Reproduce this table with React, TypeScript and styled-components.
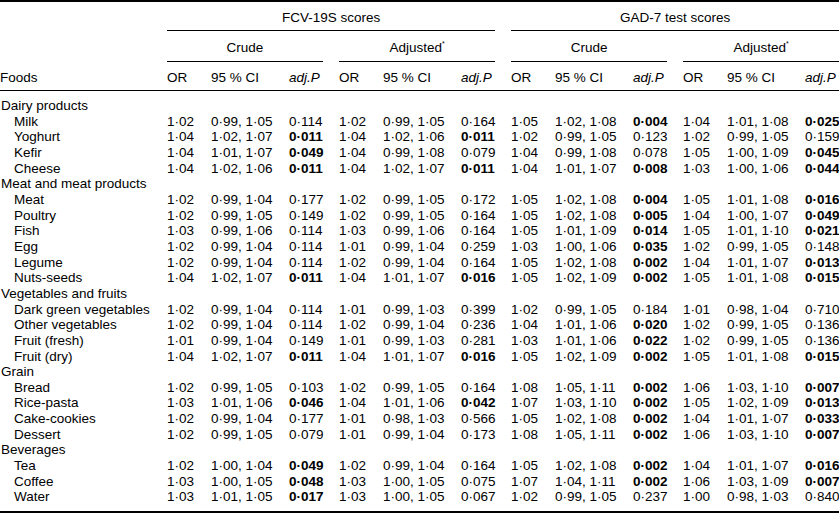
import styled, { createGlobalStyle } from "styled-components";

const GlobalStyle = createGlobalStyle`
  html, body {
    margin: 0;
    padding: 0;
    background: #fff;
  }
  body {
    font-family: "Liberation Sans", Arial, sans-serif;
    color: #000;
  }
`;

type Row =
  | { group: string }
  | { food: string; v: string[] };

// p-values that are bold in the source
const isBold = (s: string) => s.startsWith("**");
const clean = (s: string) => s.replace(/\*\*/g, "");

const rows: Row[] = [
  { group: "Dairy products" },
  { food: "Milk", v: ["1·02", "0·99, 1·05", "0·114", "1·02", "0·99, 1·05", "0·164", "1·05", "1·02, 1·08", "**0·004", "1·04", "1·01, 1·08", "**0·025"] },
  { food: "Yoghurt", v: ["1·04", "1·02, 1·07", "**0·011", "1·04", "1·02, 1·06", "**0·011", "1·02", "0·99, 1·05", "0·123", "1·02", "0·99, 1·05", "0·159"] },
  { food: "Kefir", v: ["1·04", "1·01, 1·07", "**0·049", "1·04", "0·99, 1·08", "0·079", "1·04", "0·99, 1·08", "0·078", "1·05", "1·00, 1·09", "**0·045"] },
  { food: "Cheese", v: ["1·04", "1·02, 1·06", "**0·011", "1·04", "1·02, 1·07", "**0·011", "1·04", "1·01, 1·07", "**0·008", "1·03", "1·00, 1·06", "**0·044"] },
  { group: "Meat and meat products" },
  { food: "Meat", v: ["1·02", "0·99, 1·04", "0·177", "1·02", "0·99, 1·05", "0·172", "1·05", "1·02, 1·08", "**0·004", "1·05", "1·01, 1·08", "**0·016"] },
  { food: "Poultry", v: ["1·02", "0·99, 1·05", "0·149", "1·02", "0·99, 1·05", "0·164", "1·05", "1·02, 1·08", "**0·005", "1·04", "1·00, 1·07", "**0·049"] },
  { food: "Fish", v: ["1·03", "0·99, 1·06", "0·114", "1·03", "0·99, 1·06", "0·164", "1·05", "1·01, 1·09", "**0·014", "1·05", "1·01, 1·10", "**0·021"] },
  { food: "Egg", v: ["1·02", "0·99, 1·04", "0·114", "1·01", "0·99, 1·04", "0·259", "1·03", "1·00, 1·06", "**0·035", "1·02", "0·99, 1·05", "0·148"] },
  { food: "Legume", v: ["1·02", "0·99, 1·04", "0·114", "1·02", "0·99, 1·04", "0·164", "1·05", "1·02, 1·08", "**0·002", "1·04", "1·01, 1·07", "**0·013"] },
  { food: "Nuts-seeds", v: ["1·04", "1·02, 1·07", "**0·011", "1·04", "1·01, 1·07", "**0·016", "1·05", "1·02, 1·09", "**0·002", "1·05", "1·01, 1·08", "**0·015"] },
  { group: "Vegetables and fruits" },
  { food: "Dark green vegetables", v: ["1·02", "0·99, 1·04", "0·114", "1·01", "0·99, 1·03", "0·399", "1·02", "0·99, 1·05", "0·184", "1·01", "0·98, 1·04", "0·710"] },
  { food: "Other vegetables", v: ["1·02", "0·99, 1·04", "0·114", "1·02", "0·99, 1·04", "0·236", "1·04", "1·01, 1·06", "**0·020", "1·02", "0·99, 1·05", "0·136"] },
  { food: "Fruit (fresh)", v: ["1·01", "0·99, 1·04", "0·149", "1·01", "0·99, 1·03", "0·281", "1·03", "1·01, 1·06", "**0·022", "1·02", "0·99, 1·05", "0·136"] },
  { food: "Fruit (dry)", v: ["1·04", "1·02, 1·07", "**0·011", "1·04", "1·01, 1·07", "**0·016", "1·05", "1·02, 1·09", "**0·002", "1·05", "1·01, 1·08", "**0·015"] },
  { group: "Grain" },
  { food: "Bread", v: ["1·02", "0·99, 1·05", "0·103", "1·02", "0·99, 1·05", "0·164", "1·08", "1·05, 1·11", "**0·002", "1·06", "1·03, 1·10", "**0·007"] },
  { food: "Rice-pasta", v: ["1·03", "1·01, 1·06", "**0·046", "1·04", "1·01, 1·06", "**0·042", "1·07", "1·03, 1·10", "**0·002", "1·05", "1·02, 1·09", "**0·013"] },
  { food: "Cake-cookies", v: ["1·02", "0·99, 1·04", "0·177", "1·01", "0·98, 1·03", "0·566", "1·05", "1·02, 1·08", "**0·002", "1·04", "1·01, 1·07", "**0·033"] },
  { food: "Dessert", v: ["1·02", "0·99, 1·05", "0·079", "1·01", "0·99, 1·04", "0·173", "1·08", "1·05, 1·11", "**0·002", "1·06", "1·03, 1·10", "**0·007"] },
  { group: "Beverages" },
  { food: "Tea", v: ["1·02", "1·00, 1·04", "**0·049", "1·02", "0·99, 1·04", "0·164", "1·05", "1·02, 1·08", "**0·002", "1·04", "1·01, 1·07", "**0·016"] },
  { food: "Coffee", v: ["1·03", "1·00, 1·05", "**0·048", "1·03", "1·00, 1·05", "0·075", "1·07", "1·04, 1·11", "**0·002", "1·06", "1·03, 1·09", "**0·007"] },
  { food: "Water", v: ["1·03", "1·01, 1·05", "**0·017", "1·03", "1·00, 1·05", "0·067", "1·02", "0·99, 1·05", "0·237", "1·00", "0·98, 1·03", "0·840"] },
];

const App = () => {
  const triples = [0, 1, 2, 3];
  return (
    <>
      <GlobalStyle />
      <Frame>
        <Table>
          <colgroup>
            <col style={{ width: 167 }} />
            {triples.map((t) => (
              <Triple key={t} spacer={t < 3} />
            ))}
          </colgroup>
          <thead>
            <tr>
              <Blank />
              <GroupHead colSpan={7}>FCV-19S scores</GroupHead>
              <Blank />
              <GroupHead colSpan={7}>GAD-7 test scores</GroupHead>
            </tr>
            <tr>
              <Blank />
              {triples.map((t) => (
                <SubHeads key={t} label={t % 2 === 0 ? "Crude" : "Adjusted"} star={t % 2 === 1} spacer={t < 3} />
              ))}
            </tr>
            <tr>
              <ColHead>Foods</ColHead>
              {triples.map((t) => (
                <ColHeads key={t} spacer={t < 3} />
              ))}
            </tr>
          </thead>
          <tbody>
            {rows.map((r, i) =>
              "group" in r ? (
                <tr key={i}>
                  <Food>{r.group}</Food>
                  <td colSpan={15} />
                </tr>
              ) : (
                <tr key={i}>
                  <Food indent>{r.food}</Food>
                  {r.v.map((val, j) => (
                    <Cells key={j} value={val} spacer={j % 3 === 2 && j < 11} />
                  ))}
                </tr>
              )
            )}
          </tbody>
        </Table>
      </Frame>
    </>
  );
};

const Triple = ({ spacer }: { spacer: boolean }) => (
  <>
    <col style={{ width: 44 }} />
    <col style={{ width: 78 }} />
    <col style={{ width: 34 }} />
    {spacer && <col style={{ width: 16 }} />}
  </>
);

const SubHeads = ({ label, star, spacer }: { label: string; star: boolean; spacer: boolean }) => (
  <>
    <SubHead colSpan={3}>
      {label}
      {star && <Star>*</Star>}
    </SubHead>
    {spacer && <Blank />}
  </>
);

const ColHeads = ({ spacer }: { spacer: boolean }) => (
  <>
    <ColHead>OR</ColHead>
    <ColHead>95 % CI</ColHead>
    <ColHead>
      <em>adj.P</em>
    </ColHead>
    {spacer && <ColHead />}
  </>
);

const Cells = ({ value, spacer }: { value: string; spacer: boolean }) => (
  <>
    <Value bold={isBold(value)}>{clean(value)}</Value>
    {spacer && <td />}
  </>
);

const Frame = styled.div`
  width: 839px;
  border-top: 2px solid #000;
  border-bottom: 2px solid #000;
  overflow: hidden;
`;

const Table = styled.table`
  table-layout: fixed;
  width: 839px;
  border-collapse: separate;
  border-spacing: 0;
  font-size: 13.5px;
  line-height: 16px;

  td,
  th {
    padding: 0;
    white-space: nowrap;
  }

  tbody tr:first-child td {
    padding-top: 7px;
  }

  tbody tr:last-child td {
    padding-bottom: 6px;
  }
`;

const Blank = styled.th``;

const GroupHead = styled.th`
  font-weight: 400;
  text-align: center;
  padding: 8px 0 4px !important;
  border-bottom: 1px solid #000;
`;

const SubHead = styled.th`
  font-weight: 400;
  text-align: center;
  padding: 9px 0 5px !important;
  border-bottom: 1px solid #000;
`;

const Star = styled.sup`
  font-size: 7px;
  line-height: 0;
  vertical-align: 6px;
`;

const ColHead = styled.th`
  font-weight: 400;
  text-align: left;
  padding: 8px 0 4px !important;
  border-bottom: 1px solid #000;

  em {
    font-style: italic;
  }
`;

const Food = styled.td<{ indent?: boolean }>`
  padding-left: ${(p) => (p.indent ? "14px" : "1px")} !important;
  line-height: 15.65px;
`;

const Value = styled.td<{ bold: boolean }>`
  font-weight: ${(p) => (p.bold ? 700 : 400)};
  line-height: 15.65px;
`;

export default App;
